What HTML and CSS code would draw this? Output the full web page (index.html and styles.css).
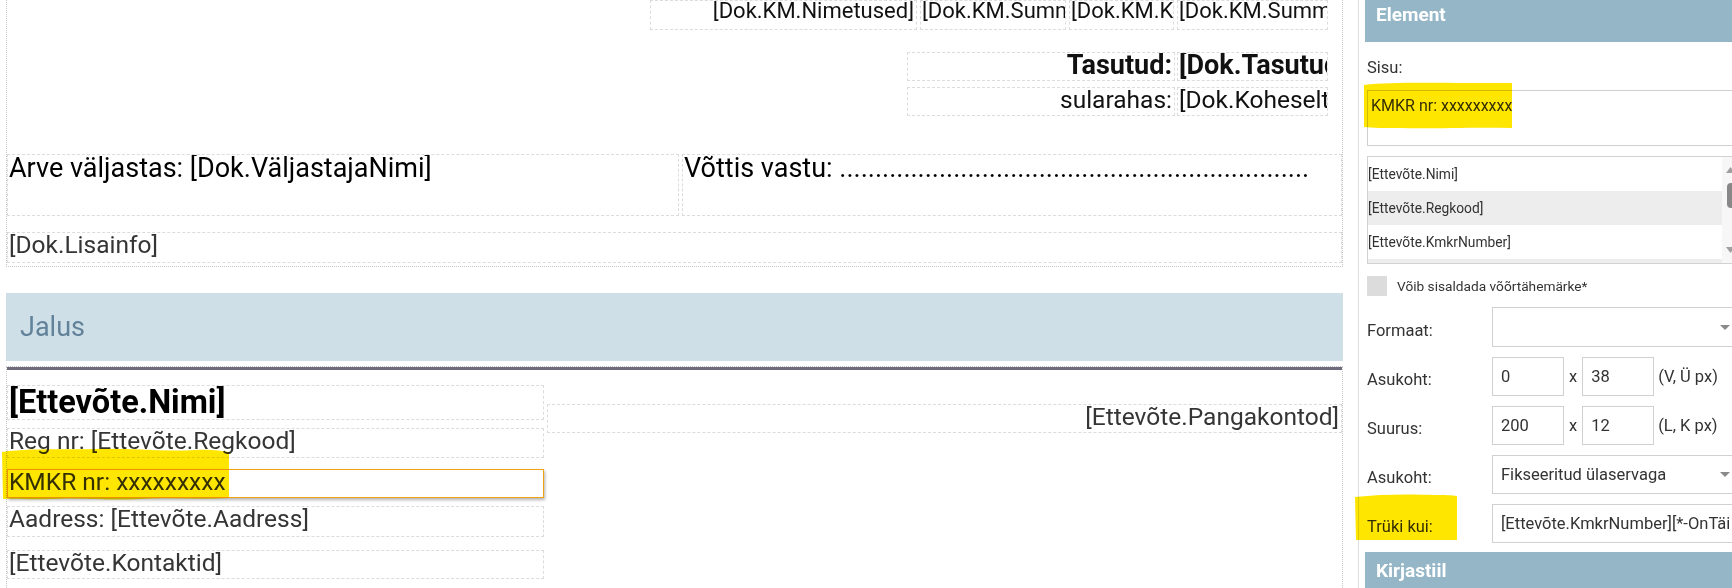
FILE: index.html
```html
<!DOCTYPE html>
<html lang="et">
<head>
<meta charset="utf-8">
<title>Aruande kujundus</title>
<link rel="stylesheet" href="styles.css">
</head>
<body>
<div class="app">
  <main class="doc">
    <section class="band band-body">
      <div class="row r1">
        <div class="fld w267 right">[Dok.KM.Nimetused]</div>
        <div class="fld w146">[Dok.KM.Summa]</div>
        <div class="fld w105">[Dok.KM.Käibemaks]</div>
        <div class="fld w151">[Dok.KM.Summa]</div>
      </div>
      <div class="row r2">
        <div class="fld w268 right bold">Tasutud:</div>
        <div class="fld w151 bold">[Dok.Tasutud]</div>
      </div>
      <div class="row r3">
        <div class="fld w268 right">sularahas:</div>
        <div class="fld w151">[Dok.KoheseltMakstud]</div>
      </div>
      <div class="row r4">
        <div class="fld big w672">Arve väljastas: [Dok.VäljastajaNimi]</div>
        <div class="fld big w660">Võttis vastu: ..................................................................</div>
      </div>
      <div class="row r5">
        <div class="fld gray full">[Dok.Lisainfo]</div>
      </div>
    </section>

    <div class="band-title">Jalus</div>

    <section class="band band-footer">
      <div class="bar"></div>
      <div class="footer-grid">
        <div class="fcol">
          <div class="fld name">[Ettevõte.Nimi]</div>
          <div class="fld gray reg">Reg nr: [Ettevõte.Regkood]</div>
          <div class="fld gray kmkr">KMKR nr: xxxxxxxxx</div>
          <div class="fld gray addr">Aadress: [Ettevõte.Aadress]</div>
          <div class="fld gray cont">[Ettevõte.Kontaktid]</div>
        </div>
        <div class="fcol-right">
          <div class="fld gray right bank">[Ettevõte.Pangakontod]</div>
        </div>
      </div>
    </section>
  </main>

  <aside class="panel">
    <div class="phead phead-top">Element</div>
    <div class="pbody">
      <div class="plabel sisu">Sisu:</div>
      <div class="textarea">KMKR nr: xxxxxxxxx</div>
      <div class="list">
        <div class="list-items">
          <div class="li">[Ettevõte.Nimi]</div>
          <div class="li alt">[Ettevõte.Regkood]</div>
          <div class="li">[Ettevõte.KmkrNumber]</div>
          <div class="li alt">[Ettevõte.Aadress]</div>
        </div>
        <div class="vscroll">
          <svg class="sb" width="17" height="106" viewBox="0 0 17 106">
            <path d="M4 16 L8.5 10 L13 16 Z" fill="#a0a0a0"/>
            <rect x="5" y="26" width="8" height="25" rx="4" fill="#888"/>
            <path d="M4 90 L8.5 96 L13 90 Z" fill="#a0a0a0"/>
          </svg>
        </div>
      </div>
      <div class="check"><span class="cbox"></span><span>Võib sisaldada võõrtähemärke*</span></div>

      <div class="frow first">
        <span class="flbl">Formaat:</span>
        <div class="ctrl select"><span class="val"></span>
          <svg class="caret" width="10" height="5" viewBox="0 0 10 5"><path d="M0 0 L10 0 L5 5 Z" fill="#8a8a8a"/></svg>
        </div>
      </div>
      <div class="frow">
        <span class="flbl">Asukoht:</span>
        <div class="ctrl small">0</div>
        <span class="sep">x</span>
        <div class="ctrl small">38</div>
        <span class="unit">(V, Ü px)</span>
      </div>
      <div class="frow">
        <span class="flbl">Suurus:</span>
        <div class="ctrl small">200</div>
        <span class="sep">x</span>
        <div class="ctrl small">12</div>
        <span class="unit">(L, K px)</span>
      </div>
      <div class="frow">
        <span class="flbl">Asukoht:</span>
        <div class="ctrl select"><span class="val">Fikseeritud ülaservaga</span>
          <svg class="caret" width="10" height="5" viewBox="0 0 10 5"><path d="M0 0 L10 0 L5 5 Z" fill="#8a8a8a"/></svg>
        </div>
      </div>
      <div class="frow">
        <span class="flbl">Trüki kui:</span>
        <div class="ctrl wide"><span class="val">[Ettevõte.KmkrNumber][*-OnTäidetud]</span></div>
      </div>
    </div>
    <div class="phead phead-sub">Kirjastiil</div>
  </aside>

  <svg class="marks" width="1732" height="588" viewBox="0 0 1732 588">
    <path d="M2 452 C30 448 60 450 95 449 C130 448 160 452 195 450 C210 449 222 451 229 452 L229 498 C200 500 170 497 140 499 C110 501 80 497 50 499 C30 500 15 498 3 499 Z" fill="#ffe600"/>
    <path d="M1364 85 C1390 82 1430 83 1470 83 C1490 83 1505 83 1512 83 L1512 128 C1470 127 1430 129 1400 128 C1385 128 1372 128 1364 127 Z" fill="#ffe600"/>
    <path d="M1355 497 C1380 494 1410 494 1435 495 C1445 495 1452 495 1457 496 L1457 540 C1420 540 1390 540 1356 540 Z" fill="#ffe600"/>
  </svg>
</div>
</body>
</html>
```

FILE: styles.css
```css
html, body {
  margin: 0;
  padding: 0;
  background: #ffffff;
  overflow: hidden;
}

body {
  font-family: Roboto, "Liberation Sans", Arial, sans-serif;
  color: #222;
}

.app {
  position: relative;
  display: flex;
  align-items: flex-start;
  width: 1760px;
  height: 588px;
}

/* ---------- document canvas ---------- */
.doc {
  flex: none;
  width: 1358px;
  box-sizing: border-box;
  padding-left: 6px;
  padding-right: 15px;
}

.band {
  box-sizing: border-box;
  border-left: 1px dotted #c6c6c6;
  border-right: 1px dotted #c6c6c6;
}

.band-body {
  height: 267px;
  border-bottom: 1px dotted #c6c6c6;
}

.row {
  display: flex;
}

.fld {
  box-sizing: border-box;
  border: 1px dashed #dcdcdc;
  white-space: nowrap;
  overflow: hidden;
  font-size: 24.5px;
  line-height: 24px;
  color: #111;
  padding: 0 1px;
}

.fld.right { text-align: right; padding-right: 2px; }
.fld.bold { font-weight: 700; font-size: 27px; line-height: 25px; }
.fld.gray { color: #353535; }

.r1 {
  justify-content: flex-end;
  gap: 3px;
  padding-right: 14px;
}
.r1 .fld {
  height: 30px;
  font-size: 22px;
  line-height: 20px;
}
.w267 { width: 267px; }
.w146 { width: 146px; }
.w105 { width: 105px; }
.w151 { width: 151px; }
.w268 { width: 268px; }

.r2, .r3 {
  justify-content: flex-end;
  gap: 2px;
  padding-right: 14px;
}
.r2 { margin-top: 22px; }
.r3 { margin-top: 6px; }
.r2 .fld, .r3 .fld { height: 29px; }

.r4 {
  margin-top: 38px;
  gap: 3px;
}
.fld.big {
  height: 62px;
  font-size: 27px;
  line-height: 26px;
  color: #000;
}
.w672 { width: 672px; }
.w660 { width: 660px; }

.r5 { margin-top: 16px; }
.r5 .fld { height: 31px; }
.full { width: 100%; }

.band-title {
  margin-top: 26px;
  height: 68px;
  box-sizing: border-box;
  background: #cfdfe7;
  padding: 18px 0 0 14px;
  font-size: 27px;
  line-height: 32px;
  color: #62829a;
}

.band-footer {
  margin-top: 5px;
  height: 260px;
  border-top: 1px dotted #c6c6c6;
}

.bar {
  height: 3px;
  background: #6c6c7c;
}

.footer-grid {
  display: flex;
  gap: 3px;
}

.fcol {
  flex: none;
  width: 537px;
  display: flex;
  flex-direction: column;
}

.fcol-right {
  flex: 1;
}

.fld.name {
  margin-top: 15px;
  height: 35px;
  font-size: 32.5px;
  line-height: 32px;
  font-weight: 700;
  color: #000;
}
.fld.reg { margin-top: 8px; height: 30px; }
.fld.kmkr {
  margin-top: 11px;
  height: 29px;
  border: 1px solid #f1a213;
  box-shadow: 1px 2px 3px rgba(0, 0, 0, 0.3);
}
.fld.addr { margin-top: 8px; height: 31px; }
.fld.cont { margin-top: 13px; height: 29px; }
.fld.bank { margin-top: 34px; height: 29px; }

/* ---------- properties panel ---------- */
.panel {
  flex: none;
  width: 390px;
  height: 588px;
  box-sizing: border-box;
  border-left: 1px solid #dedede;
  padding-left: 6px;
  color: #333;
}

.phead {
  box-sizing: border-box;
  background: #94b6c6;
  color: #fff;
  font-weight: 700;
  font-size: 19px;
  line-height: 22px;
  padding-left: 11px;
}
.phead-top {
  height: 42px;
  padding-top: 4px;
}
.phead-sub {
  margin-top: 9px;
  height: 40px;
  padding-top: 8px;
}

.pbody {
  padding: 0 8px 0 2px;
}

.plabel {
  font-size: 16.5px;
  line-height: 19px;
}
.sisu { padding-top: 16px; }

.textarea {
  margin-top: 13px;
  height: 56px;
  box-sizing: border-box;
  border: 1px solid #cfcfcf;
  padding: 6px 3px 0;
  font-size: 16px;
  line-height: 18px;
  color: #333;
}

.list {
  margin-top: 10px;
  height: 108px;
  box-sizing: border-box;
  border: 1px solid #d2d2d2;
  display: flex;
  overflow: hidden;
}
.list-items {
  flex: 1;
}
.li {
  height: 34px;
  font-size: 13.8px;
  line-height: 34px;
  color: #333;
  white-space: nowrap;
}
.li.alt { background: #ededed; }
.vscroll {
  flex: none;
  width: 17px;
  background: #f7f7f7;
}
.sb { display: block; }

.check {
  margin-top: 12px;
  display: flex;
  align-items: center;
  gap: 10px;
  font-size: 13.7px;
  line-height: 16px;
  color: #333;
}
.cbox {
  width: 20px;
  height: 20px;
  background: #dcdcdc;
}

.frow {
  display: flex;
  align-items: center;
  margin-top: 10px;
  height: 39px;
  font-size: 16.5px;
}
.frow.first {
  margin-top: 11px;
  height: 40px;
}
.flbl {
  flex: none;
  width: 125px;
  line-height: 19px;
  padding-top: 6px;
}
.ctrl {
  box-sizing: border-box;
  height: 100%;
  border: 1px solid #d0d0d0;
  padding: 0 9px 0 8px;
  display: flex;
  align-items: center;
  line-height: 19px;
  color: #333;
  white-space: nowrap;
  overflow: hidden;
}
.ctrl.select, .ctrl.wide { flex: 1; }
.ctrl .val { flex: 1; overflow: hidden; }
.ctrl.small { width: 72px; flex: none; }
.caret { flex: none; display: block; }
.sep { margin: 0 5px 0 5px; }
.unit { margin-left: 4px; }

/* ---------- highlighter marks (overlay) ---------- */
.marks {
  position: absolute;
  left: 0;
  top: 0;
  pointer-events: none;
  mix-blend-mode: multiply;
}
```
